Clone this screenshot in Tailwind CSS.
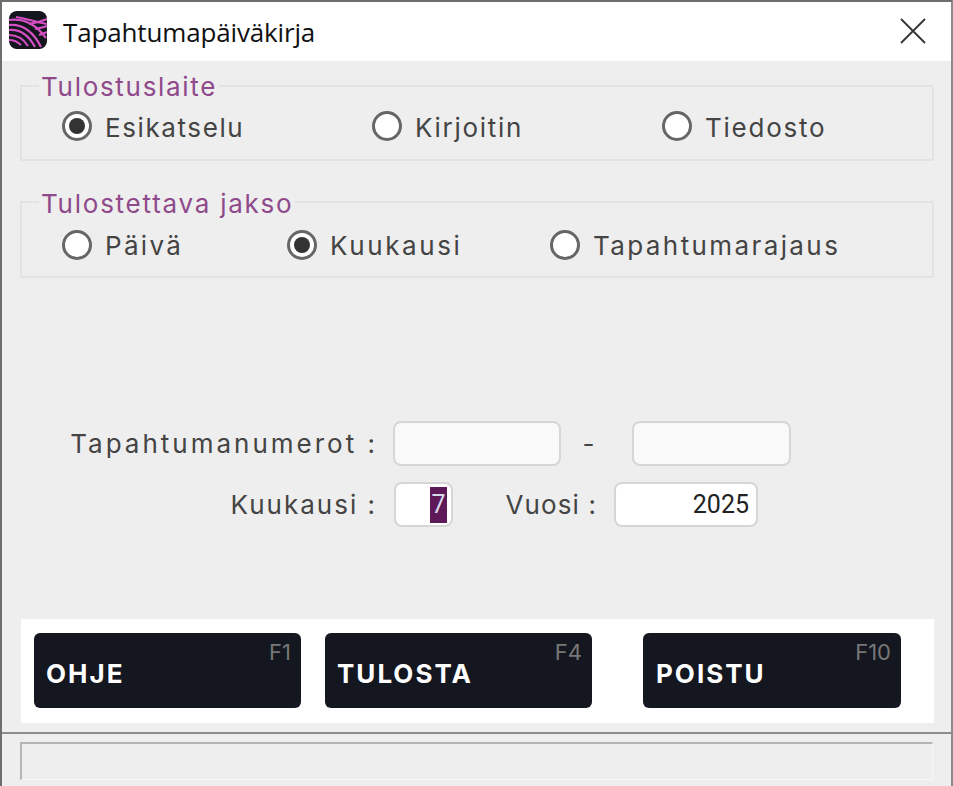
<!DOCTYPE html>
<html lang="fi">
<head>
    <meta charset="UTF-8">
    <title>Tapahtumapäiväkirja</title>
    <script src="https://cdn.jsdelivr.net/npm/@tailwindcss/browser@4"></script>
</head>
<body class="w-[953px] h-[786px] overflow-hidden bg-[#eeeeee] font-['Inter','Liberation_Sans',sans-serif]">

<div class="w-[953px] h-[786px] flex flex-col border-l-2 border-t-2 border-r-2 border-[#6e6e6e] border-r-[#8a8a8a]">

    <!-- title bar -->
    <div class="h-[59px] shrink-0 bg-white flex items-center pl-[7px] pr-[25px]">
        <svg class="w-[38px] h-[38px] shrink-0 mb-[3px]" viewBox="0 0 38 38">
            <rect width="38" height="38" rx="8" fill="#14161d"/>
            <g fill="none" stroke="#d44fc4" stroke-width="2.2">
                <path d="M0 9 C14 7 26 12 37 27"/>
                <path d="M0 14 C12 13 23 18 32 36"/>
                <path d="M0 19 C10 18 19 23 26 36"/>
                <path d="M0 24 C8 24 14 27 19 35"/>
                <path d="M0 29 C5 29 9 31 12 34"/>
                <path d="M7 6 C16 7 25 11 38 13"/>
                <path d="M20 13 C27 12 33 10 38 8"/>
                <path d="M26 18 C31 17 35 16 38 15"/>
                <path d="M30 24 C33 23 35 22 38 21"/>
            </g>
        </svg>
        <span class="ml-[16px] text-[26px] text-[#111] font-['Open_Sans',sans-serif] tracking-[-0.15px] mt-[1px]">Tapahtumapäiväkirja</span>
        <svg class="ml-auto w-[26px] h-[26px] mb-[1px]" viewBox="0 0 26 26" stroke="#333" stroke-width="1.8" fill="none">
            <path d="M1 1 L25 25 M25 1 L1 25"/>
        </svg>
    </div>

    <!-- form area -->
    <div class="flex-1 flex flex-col pl-[19px] pr-[17px]">

        <fieldset class="h-[90px] mt-[10px] ml-[-1px] w-[914px] border-2 border-[#e3e3e3] pl-[20px]">
            <legend class="ml-[-3px] px-[2px] pt-[3px] pb-[1px] text-[26px] leading-[26px] text-[#8e4a8a] tracking-[1.7px]">Tulostuslaite</legend>
            <div class="flex items-center ml-[20px] mt-[5px] h-[40px] text-[26px] text-[#444]">
                <label class="w-[310px] flex items-center gap-[13px] tracking-[1.6px]">
                    <span class="w-[30px] h-[30px] rounded-full border-[3px] border-[#666] bg-white flex items-center justify-center"><span class="w-[16px] h-[16px] rounded-full bg-[#333]"></span></span>
                    <span class="mt-[2px]">Esikatselu</span>
                </label>
                <label class="w-[290px] flex items-center gap-[13px] tracking-[1.7px]">
                    <span class="w-[30px] h-[30px] rounded-full border-[3px] border-[#666] bg-white"></span>
                    <span class="mt-[2px]">Kirjoitin</span>
                </label>
                <label class="flex items-center gap-[13px] tracking-[1.75px]">
                    <span class="w-[30px] h-[30px] rounded-full border-[3px] border-[#666] bg-white"></span>
                    <span class="mt-[2px]">Tiedosto</span>
                </label>
            </div>
        </fieldset>

        <fieldset class="h-[91px] mt-[26px] ml-[-1px] w-[914px] border-2 border-[#e3e3e3] pl-[20px]">
            <legend class="ml-[-3px] px-[2px] pt-[4px] text-[26px] leading-[26px] text-[#8e4a8a] tracking-[1.75px]">Tulostettava jakso</legend>
            <div class="flex items-center ml-[20px] mt-[8px] h-[40px] text-[26px] text-[#444]">
                <label class="w-[225px] flex items-center gap-[13px] tracking-[2.3px]">
                    <span class="w-[30px] h-[30px] rounded-full border-[3px] border-[#666] bg-white"></span>
                    Päivä
                </label>
                <label class="w-[263px] flex items-center gap-[13px] tracking-[2.6px]">
                    <span class="w-[30px] h-[30px] rounded-full border-[3px] border-[#666] bg-white flex items-center justify-center"><span class="w-[16px] h-[16px] rounded-full bg-[#333]"></span></span>
                    Kuukausi
                </label>
                <label class="flex items-center gap-[13px] tracking-[2.4px]">
                    <span class="w-[30px] h-[30px] rounded-full border-[3px] border-[#666] bg-white"></span>
                    Tapahtumarajaus
                </label>
            </div>
        </fieldset>

        <!-- number fields -->
        <div class="mt-[143px] flex items-center h-[45px] text-[26px] text-[#444]">
            <span class="w-[357px] text-right whitespace-nowrap tracking-[3px]">Tapahtumanumerot :</span>
            <div class="ml-[15px] w-[168px] h-[45px] rounded-[8px] border-2 border-[#d6d6d6] bg-[#f9f9f9]"></div>
            <span class="w-[71px] text-center pr-[16px]">-</span>
            <div class="w-[159px] h-[45px] rounded-[8px] border-2 border-[#d6d6d6] bg-[#f9f9f9]"></div>
        </div>
        <div class="mt-[16px] flex items-center h-[45px] text-[26px] text-[#444]">
            <span class="w-[356px] text-right tracking-[2px]">Kuukausi :</span>
            <div class="ml-[17px] w-[59px] h-[45px] rounded-[8px] border-2 border-[#d6d6d6] bg-white flex items-center justify-end pr-[4px]">
                <span class="bg-[#5e1a58] text-[#d8d8ec] text-[25px] h-[36px] leading-[36px] w-[17px] text-center font-['Roboto',sans-serif]">7</span>
            </div>
            <span class="w-[144px] text-right tracking-[1.1px]">Vuosi :</span>
            <div class="ml-[17px] w-[144px] h-[45px] rounded-[8px] border-2 border-[#d6d6d6] bg-white flex items-center justify-end pr-[7px] text-[#222] text-[25px] font-['Roboto',sans-serif]">2025</div>
        </div>

        <!-- buttons -->
        <div class="mt-[92px] w-[913px] h-[104px] bg-white flex items-start pt-[14px] pl-[13px]">
            <button class="relative w-[267px] h-[75px] rounded-[6px] bg-[#14171f] text-white font-bold text-[26px] tracking-[2px] text-left pl-[12px] pt-[5px]">
                OHJE
                <span class="absolute top-[3px] right-[10px] text-[22px] font-normal tracking-normal text-[#777]">F1</span>
            </button>
            <button class="relative ml-[24px] w-[267px] h-[75px] rounded-[6px] bg-[#14171f] text-white font-bold text-[26px] tracking-[2px] text-left pl-[12px] pt-[5px]">
                TULOSTA
                <span class="absolute top-[3px] right-[10px] text-[22px] font-normal tracking-normal text-[#777]">F4</span>
            </button>
            <button class="relative ml-[51px] w-[258px] h-[75px] rounded-[6px] bg-[#14171f] text-white font-bold text-[26px] tracking-[2px] text-left pl-[13px] pt-[5px]">
                POISTU
                <span class="absolute top-[3px] right-[10px] text-[22px] font-normal tracking-normal text-[#777]">F10</span>
            </button>
        </div>
    </div>

    <!-- status bar -->
    <div class="h-[54px] shrink-0 border-t-2 border-[#8c8c8c] pt-[8px] pl-[18px]">
        <div class="w-[913px] h-[38px] border-t-2 border-l-2 border-[#b4b4b4] border-r border-b border-r-[#f6f6f6] border-b-[#f6f6f6]"></div>
    </div>
</div>

</body>
</html>
